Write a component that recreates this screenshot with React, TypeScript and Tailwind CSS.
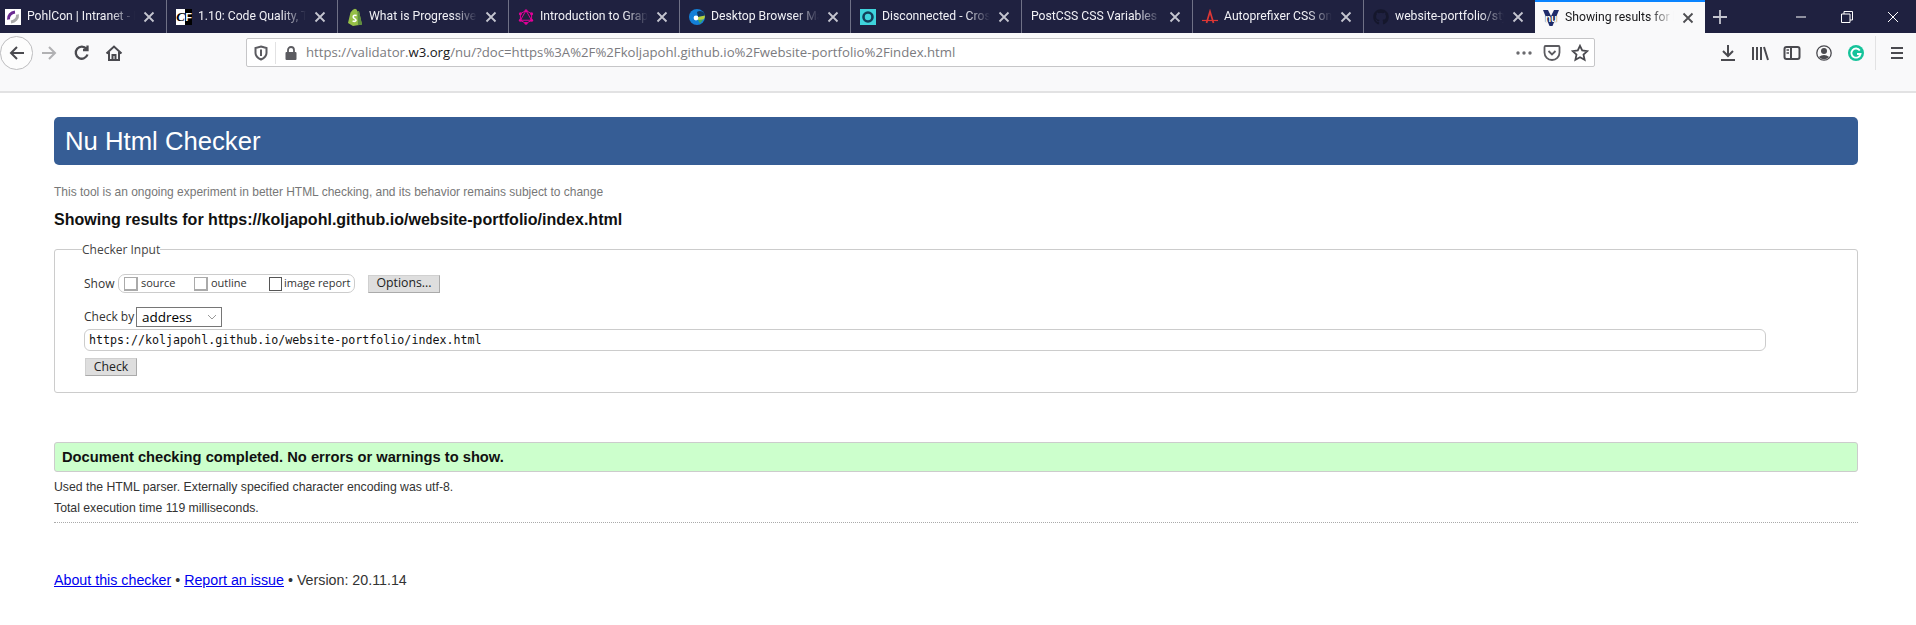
import React from "react";
import { FaGithub } from "react-icons/fa";

const PohlIcon = () => (
  <svg width="16" height="16" viewBox="0 0 16 16" className="shrink-0">
    <rect width="16" height="16" fill="#fff" />
    <path d="M3.5 10.5 C3 6.5 6 3.5 10 3" fill="none" stroke="#6a2a91" strokeWidth="3" />
    <path d="M12.5 5.5 C13 9.5 10 12.5 6 13" fill="none" stroke="#a9a9a9" strokeWidth="3" />
  </svg>
);
const CfIcon = () => (
  <div className="flex h-4 w-4 shrink-0 bg-white font-['Liberation_Serif',serif] text-[13px] leading-4 font-bold italic">
    <span className="w-[9px] text-center text-black">C</span>
    <span className="w-[7px] bg-black text-center font-['Liberation_Sans',sans-serif] text-[11px] text-white not-italic">F</span>
  </div>
);
const ShopifyIcon = () => (
  <svg width="16" height="18" viewBox="0 0 16 18" className="shrink-0">
    <path d="M1 15 L3.5 4.5 Q6 1 8 0.8 Q10 1 10.5 3.5 L12 3.2 L15 16.5 L6 18 Z" fill="#95bf47" />
    <path d="M10.5 3.5 L12 3.2 L15 16.5 L11 17.3 Z" fill="#5e8e3e" />
    <path d="M9.6 7.6 Q6.2 6.6 6.2 9 C6.2 10.6 9 10.6 9 12.3 Q8.6 14 5.6 13" fill="none" stroke="#fff" strokeWidth="1.6" />
  </svg>
);
const GraphqlIcon = () => (
  <svg width="16" height="16" viewBox="0 0 16 16" className="shrink-0" fill="none" stroke="#e10098">
    <path d="M8 1.5 L13.6 4.75 V11.25 L8 14.5 L2.4 11.25 V4.75 Z M8 1.5 L2.4 11.25 H13.6 Z" strokeWidth="1" />
    <g fill="#e10098" stroke="none">
      <circle cx="8" cy="1.8" r="1.5" /><circle cx="13.6" cy="4.75" r="1.5" /><circle cx="13.6" cy="11.25" r="1.5" />
      <circle cx="8" cy="14.2" r="1.5" /><circle cx="2.4" cy="11.25" r="1.5" /><circle cx="2.4" cy="4.75" r="1.5" />
    </g>
  </svg>
);
const StatIcon = () => (
  <svg width="16" height="16" viewBox="0 0 16 16" className="shrink-0">
    <circle cx="8" cy="8" r="8" fill="#1380d8" />
    <path d="M8 3 A5 5 0 0 1 16 7 L9 8 Z" fill="#10365f" />
    <path d="M9 8 L16 6.5 Q16 9 14.5 10.5 L9 11 Z" fill="#b5cf3a" />
    <circle cx="7" cy="9" r="2.4" fill="#fff" />
    <path d="M9 11 H14 L11 14.5 Z" fill="#47a85c" />
  </svg>
);
const CbtIcon = () => (
  <svg width="16" height="16" viewBox="0 0 16 16" className="shrink-0">
    <rect width="16" height="16" fill="#3fd4dc" />
    <circle cx="8" cy="8" r="4.5" fill="none" stroke="#12405a" strokeWidth="2.6" />
  </svg>
);
const AutoprefixerIcon = () => (
  <svg width="16" height="16" viewBox="0 0 16 16" className="shrink-0" fill="none" stroke="#dd3735">
    <path d="M0 11.5 H16" strokeWidth="1.2" />
    <path d="M4.5 14 L8 2.5 L11.5 14" strokeWidth="1.7" />
  </svg>
);
const GithubIcon = () => <FaGithub className="h-4 w-4 shrink-0 text-[#15172c]" />;
const NuIcon = () => (
  <div className="relative h-4 w-4 shrink-0">
    <svg width="16" height="16" viewBox="0 0 16 16">
      <path d="M0 0 L5 0 L8 6 L11 0 L16 0 L9.5 16 L6.5 16 Z" fill="#1f2c6b" />
    </svg>
    <span className="absolute top-[4px] left-[2px] font-['Liberation_Sans',sans-serif] text-[10px] leading-[9px] font-bold text-white [text-shadow:0_0_1px_#000]">nu</span>
  </div>
);

const CloseX = ({ dark }: { dark?: boolean }) => (
  <svg width="16" height="16" viewBox="0 0 16 16" className="shrink-0" fill="none" stroke={dark ? "#4e4e52" : "#c4c5cf"} strokeWidth="1.8">
    <path d="M3.5 3.5 L12.5 12.5 M12.5 3.5 L3.5 12.5" />
  </svg>
);

const tabs = [
  { title: "PohlCon | Intranet - L", icon: <PohlIcon />, cls: "w-[167px] pl-[5px]" },
  { title: "1.10: Code Quality, Te", icon: <CfIcon />, cls: "w-[171px] pl-[9px]" },
  { title: "What is Progressive E", icon: <ShopifyIcon />, cls: "w-[171px] pl-[9px]" },
  { title: "Introduction to Graph", icon: <GraphqlIcon />, cls: "w-[171px] pl-[9px]" },
  { title: "Desktop Browser Mar", icon: <StatIcon />, cls: "w-[171px] pl-[9px]" },
  { title: "Disconnected - Cross", icon: <CbtIcon />, cls: "w-[171px] pl-[9px]" },
  { title: "PostCSS CSS Variables Pla", icon: null, cls: "w-[171px] pl-[9px]" },
  { title: "Autoprefixer CSS onli", icon: <AutoprefixerIcon />, cls: "w-[171px] pl-[9px]" },
  { title: "website-portfolio/sty", icon: <GithubIcon />, cls: "w-[171px] pl-[9px]" },
];

const Tab = ({ title, icon, cls, last }: { title: string; icon: React.ReactNode; cls: string; last?: boolean }) => (
  <div className={`flex h-[33px] shrink-0 items-center gap-[6px] pr-[9px] ${last ? "" : "border-r border-[#6f7186]"} ${cls}`}>
    {icon}
    <span className="min-w-0 flex-1 font-['Roboto',sans-serif] text-[12.2px] whitespace-nowrap text-[#f0f0f5] [mask-image:linear-gradient(to_left,transparent,#000_24px)]">
      {title}
    </span>
    <CloseX />
  </div>
);

const Ic = ({ children, w = 32 }: { children: React.ReactNode; w?: number }) => (
  <div className="flex h-[34px] shrink-0 items-center justify-center" style={{ width: w }}>
    {children}
  </div>
);

const Stroke = ({ d, c = "#4a4a4f", w = 2 }: { d: string; c?: string; w?: number }) => (
  <svg width="18" height="18" viewBox="0 0 18 18" fill="none" stroke={c} strokeWidth={w}>
    <path d={d} />
  </svg>
);

const Check = ({ cls }: { cls: string }) => (
  <input type="checkbox" readOnly className={`h-[14px] shrink-0 appearance-none border bg-white ${cls}`} />
);

const Btn = ({ label, cls }: { label: string; cls: string }) => (
  <button className={`flex h-[18px] items-center justify-center border border-[#d0d0d0] border-r-[#aaa] border-b-[#aaa] bg-[#dedede] font-['Open_Sans',sans-serif] text-[12.3px] text-[#222] ${cls}`}>
    {label}
  </button>
);

export default function App() {
  return (
    <div className="h-[625px] w-[1916px] overflow-hidden bg-white font-['Open_Sans',sans-serif]">
      {/* Tab strip */}
      <div className="flex h-[33px] items-stretch bg-[#1f2140]">
        {tabs.map((t) => (
          <Tab key={t.title} {...t} last={t.title.startsWith("website")} />
        ))}
        <div className="flex h-[33px] w-[170px] shrink-0 flex-col bg-[#f9f9fa]">
          <div className="h-[2px] bg-[#0a84ff]" />
          <div className="flex flex-1 items-center gap-[6px] pr-[9px] pl-[8px]">
            <NuIcon />
            <span className="min-w-0 flex-1 font-['Roboto',sans-serif] text-[12.2px] whitespace-nowrap text-[#18181a] [mask-image:linear-gradient(to_left,transparent,#000_24px)]">
              Showing results for h
            </span>
            <CloseX dark />
          </div>
        </div>
        <div className="ml-[7px] flex w-[20px] items-center justify-center">
          <svg width="16" height="16" viewBox="0 0 16 16" stroke="#c4c5cf" strokeWidth="1.8">
            <path d="M8 1 V15 M1 8 H15" />
          </svg>
        </div>
        <div className="ml-[50px] flex w-[138px] items-center">
          <div className="flex w-[46px] justify-center">
            <svg width="12" height="12" viewBox="0 0 12 12" stroke="#fff"><path d="M1 6 H11" /></svg>
          </div>
          <div className="flex w-[46px] justify-center">
            <svg width="12" height="12" viewBox="0 0 12 12" fill="none" stroke="#fff">
              <path d="M0.5 3 H9 V11.5 H0.5 Z M3 3 V0.5 H11.5 V9 H9" />
            </svg>
          </div>
          <div className="flex w-[46px] justify-center">
            <svg width="12" height="12" viewBox="0 0 12 12" stroke="#fff"><path d="M1 1 L11 11 M11 1 L1 11" /></svg>
          </div>
        </div>
      </div>

      {/* Toolbar */}
      <div className="flex h-[60px] items-start border-b-2 border-[#e2e2e3] bg-[#f9f9fa] pt-[3px]">
        <div className="flex h-[34px] w-[33px] shrink-0 items-center justify-center rounded-full border border-[#bdbdbf] bg-[#fdfdfd]">
          <Stroke d="M16 9 H3 M9 3 L3 9 L9 15" />
        </div>
        <Ic>
          <Stroke d="M2 9 H15 M9 3 L15 9 L9 15" c="#b1b1b3" />
        </Ic>
        <Ic w={34}>
          <Stroke d="M14.5 10.5 A6 6 0 1 1 13.5 5 M14.5 1.5 V6 H10" w={2.3} />
        </Ic>
        <Ic w={30}>
          <svg width="18" height="18" viewBox="0 0 18 18" fill="none" stroke="#4a4a4f" strokeWidth="2">
            <path d="M1.5 9.5 L9 2.5 L16.5 9.5 M4 8 V16 H14 V8 M7.5 16 V11 H10.5 V16" />
          </svg>
        </Ic>

        <div className="mt-[2px] ml-[117px] flex h-[29px] w-[1349px] shrink-0 items-center rounded-[2px] border border-[#c6c6c8] bg-white">
          <div className="flex w-[28px] shrink-0 justify-center">
            <svg width="14" height="16" viewBox="0 0 14 16" fill="none" stroke="#5b5b60" strokeWidth="2">
              <path d="M7 1.5 L12.5 3 V8 Q12.5 12 7 14.5 Q1.5 12 1.5 8 V3 Z M7 4.5 V11" />
            </svg>
          </div>
          <div className="h-[22px] w-px shrink-0 bg-[#e2e2e3]" />
          <div className="flex w-[29px] shrink-0 justify-center">
            <svg width="14" height="16" viewBox="0 0 14 16">
              <path d="M4 7 V5 A3 3 0 0 1 10 5 V7" fill="none" stroke="#5b5b60" strokeWidth="1.8" />
              <rect x="1.5" y="7" width="11" height="8" rx="1" fill="#5b5b60" />
            </svg>
          </div>
          <span className="ml-[1px] text-[13.2px] whitespace-nowrap text-[#7b7b80]">
            https://validator.<span className="text-[#18181a]">w3.org</span>/nu/?doc=https%3A%2F%2Fkoljapohl.github.io%2Fwebsite-portfolio%2Findex.html
          </span>
          <div className="ml-auto flex items-center">
            <div className="flex w-[28px] justify-center">
              <svg width="16" height="4" viewBox="0 0 16 4" fill="#6a6a6e">
                <circle cx="2" cy="2" r="1.7" /><circle cx="8" cy="2" r="1.7" /><circle cx="14" cy="2" r="1.7" />
              </svg>
            </div>
            <div className="flex w-[28px] justify-center">
              <svg width="18" height="18" viewBox="0 0 18 18" fill="none" stroke="#5b5b60" strokeWidth="1.8">
                <path d="M2.5 2 H15.5 Q16.5 2 16.5 3.2 V8.5 A7.5 7.5 0 0 1 1.5 8.5 V3.2 Q1.5 2 2.5 2 Z M5.5 7 L9 10.5 L12.5 7" />
              </svg>
            </div>
            <div className="flex w-[28px] justify-center">
              <svg width="18" height="18" viewBox="0 0 18 18" fill="none" stroke="#4a4a4f" strokeWidth="1.8">
                <path d="M9 1.8 L11.2 6.5 L16.3 7.1 L12.5 10.6 L13.6 15.8 L9 13.2 L4.4 15.8 L5.5 10.6 L1.7 7.1 L6.8 6.5 Z" />
              </svg>
            </div>
          </div>
        </div>

        <div className="ml-[117px] flex items-center">
          <Ic>
            <Stroke d="M9 1 V11 M4 7 L9 12 L14 7 M2 16 H16" w={2} />
          </Ic>
          <Ic>
            <svg width="18" height="18" viewBox="0 0 18 18" fill="none" stroke="#4a4a4f" strokeWidth="2">
              <path d="M2 3 V16 M6 3 V16 M10 3 V16 M13 3 L17 16" />
            </svg>
          </Ic>
          <Ic>
            <svg width="18" height="18" viewBox="0 0 18 18" fill="none" stroke="#4a4a4f" strokeWidth="2">
              <rect x="1.5" y="3" width="15" height="12" rx="2" />
              <path d="M8 3 V15" />
              <path d="M3.5 6 H6 M3.5 9 H6" strokeWidth="1.3" />
            </svg>
          </Ic>
          <Ic>
            <svg width="18" height="18" viewBox="0 0 18 18" fill="none" stroke="#4a4a4f">
              <circle cx="9" cy="9" r="7.2" strokeWidth="1.3" />
              <circle cx="9" cy="7" r="3" fill="#4a4a4f" stroke="none" />
              <path d="M3.8 13 Q9 9 14.2 13 Q9 17.5 3.8 13 Z" fill="#4a4a4f" stroke="none" />
            </svg>
          </Ic>
          <Ic>
            <svg width="18" height="18" viewBox="0 0 18 18" fill="none">
              <circle cx="9" cy="9" r="8" fill="#15c39a" />
              <path d="M12.8 6.5 A4.6 4.6 0 1 0 13.5 10 H10" stroke="#fff" strokeWidth="1.8" />
            </svg>
          </Ic>
          <div className="ml-[3px] h-[34px] w-px bg-[#e2e2e3]" />
          <Ic w={42}>
            <svg width="14" height="14" viewBox="0 0 14 14" stroke="#4a4a4f" strokeWidth="2">
              <path d="M1 2 H13 M1 7 H13 M1 12 H13" />
            </svg>
          </Ic>
        </div>
      </div>

      {/* Page */}
      <main className="pr-[58px] pl-[54px] font-['Liberation_Sans',sans-serif]">
        <h1 className="mt-[24px] flex h-[48px] items-center rounded-[5px] bg-[#365d95] pl-[11px] text-[25.7px] text-white">
          Nu Html Checker
        </h1>
        <p className="mt-[19px] h-4 text-[11.97px] leading-4 text-[#777]">
          This tool is an ongoing experiment in better HTML checking, and its behavior remains subject to change
        </p>
        <h2 className="mt-[9px] h-5 text-[16.05px] leading-5 font-bold text-[#111]">
          Showing results for https://koljapohl.github.io/website-portfolio/index.html
        </h2>

        <fieldset className="mt-[12px] rounded-[3px] border border-[#ccc] pt-[17px] pr-[91px] pb-[16px] pl-[29px] font-['Open_Sans',sans-serif]">
          <legend className="-ml-[2px] px-0 pt-[2px] text-[12px] leading-[14px] text-[#444]">Checker Input</legend>
          <div className="flex h-[19px] items-center text-[12px] text-[#333]">
            <span className="w-[34px]">Show</span>
            <div className="flex h-[19px] w-[237px] items-center rounded-[7px] border border-[#ccc] pl-[5px] text-[11px] text-[#333]">
              <Check cls="w-[14px] border-[#aaa] border-b-2 border-r-2" />
              <span className="ml-[3px] w-[53px]">source</span>
              <Check cls="w-[14px] border-[#aaa] border-b-2 border-r-2" />
              <span className="ml-[3px] w-[58px]">outline</span>
              <Check cls="w-[13px] border-[#555]" />
              <span className="ml-[2px] whitespace-nowrap">image report</span>
            </div>
            <Btn label="Options..." cls="ml-[13px] w-[72px]" />
          </div>
          <div className="mt-[14px] flex h-5 items-center text-[12px] text-[#333]">
            <span className="w-[52px] whitespace-nowrap">Check by</span>
            <div className="flex h-5 w-[86px] items-center justify-between border border-[#767676] bg-white pr-[4px] pl-[5px] text-[13.5px] text-black">
              <span>address</span>
              <svg width="10" height="6" viewBox="0 0 10 6" fill="none" stroke="#999">
                <path d="M1 1 L5 5 L9 1" />
              </svg>
            </div>
          </div>
          <div className="mt-[2px] flex h-[22px] items-center rounded-[6px] border border-[#ccc] bg-white pt-[2px] pl-[4px] font-['DejaVu_Sans_Mono',monospace] text-[11.65px] text-[#111]">
            https://koljapohl.github.io/website-portfolio/index.html
          </div>
          <Btn label="Check" cls="mt-[7px] ml-[1px] w-[52px]" />
        </fieldset>

        <div className="mt-[49px] flex h-[30px] items-center rounded-[3px] border border-[#ccc] bg-[#ccffcc] pl-[7px] text-[14.7px] font-bold text-[#111]">
          Document checking completed. No errors or warnings to show.
        </div>
        <p className="mt-[5px] h-[21px] text-[12.25px] leading-[21px] text-[#333]">
          Used the HTML parser. Externally specified character encoding was utf-8.
        </p>
        <p className="h-[21px] text-[12.25px] leading-[21px] text-[#333]">Total execution time 119 milliseconds.</p>
        <div className="mt-[3px] border-t border-dotted border-[#aaa]" />
        <footer className="mt-[47px] h-5 text-[14.25px] leading-5 text-[#333]">
          <a href="#" className="text-[#0000ee] underline">About this checker</a> •{" "}
          <a href="#" className="text-[#0000ee] underline">Report an issue</a> • Version: 20.11.14
        </footer>
      </main>
    </div>
  );
}
